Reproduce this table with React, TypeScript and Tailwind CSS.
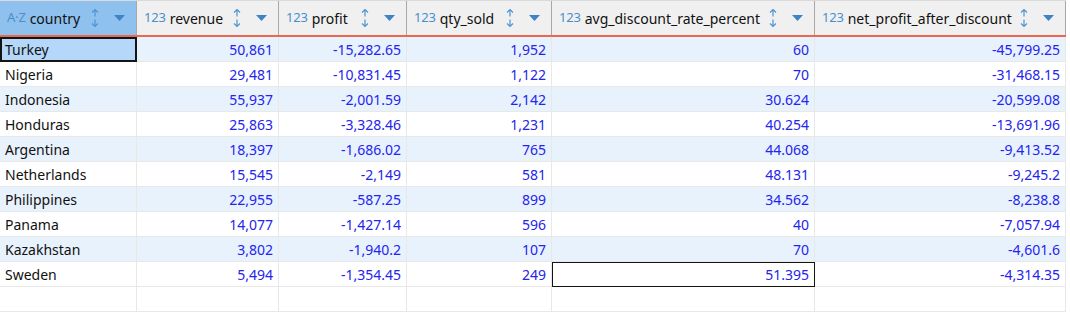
import type { ReactNode } from 'react';

type Row = {
    country: string;
    revenue: string;
    profit: string;
    qty: string;
    avg: string;
    net: string;
};

const ROWS: Row[] = [
    { country: 'Turkey', revenue: '50,861', profit: '-15,282.65', qty: '1,952', avg: '60', net: '-45,799.25' },
    { country: 'Nigeria', revenue: '29,481', profit: '-10,831.45', qty: '1,122', avg: '70', net: '-31,468.15' },
    { country: 'Indonesia', revenue: '55,937', profit: '-2,001.59', qty: '2,142', avg: '30.624', net: '-20,599.08' },
    { country: 'Honduras', revenue: '25,863', profit: '-3,328.46', qty: '1,231', avg: '40.254', net: '-13,691.96' },
    { country: 'Argentina', revenue: '18,397', profit: '-1,686.02', qty: '765', avg: '44.068', net: '-9,413.52' },
    { country: 'Netherlands', revenue: '15,545', profit: '-2,149', qty: '581', avg: '48.131', net: '-9,245.2' },
    { country: 'Philippines', revenue: '22,955', profit: '-587.25', qty: '899', avg: '34.562', net: '-8,238.8' },
    { country: 'Panama', revenue: '14,077', profit: '-1,427.14', qty: '596', avg: '40', net: '-7,057.94' },
    { country: 'Kazakhstan', revenue: '3,802', profit: '-1,940.2', qty: '107', avg: '70', net: '-4,601.6' },
    { country: 'Sweden', revenue: '5,494', profit: '-1,354.45', qty: '249', avg: '51.395', net: '-4,314.35' },
];

const COLS = [
    { key: 'country', label: 'country', kind: 'A-Z' },
    { key: 'revenue', label: 'revenue', kind: '123' },
    { key: 'profit', label: 'profit', kind: '123' },
    { key: 'qty', label: 'qty_sold', kind: '123' },
    { key: 'avg', label: 'avg_discount_rate_percent', kind: '123' },
    { key: 'net', label: 'net_profit_after_discount', kind: '123' },
] as const;

const GRID = 'grid grid-cols-[137px_142px_128px_145px_263px_251px]';

function SortIcon() {
    return (
        <svg width="10" height="20" viewBox="0 0 10 20" fill="none" stroke="#4d94d4" strokeWidth="1.2">
            <path d="M5 1.5 L5 8.5 M2 4.5 L5 1.5 L8 4.5" />
            <path d="M5 11.5 L5 18.5 M2 15.5 L5 18.5 L8 15.5" />
        </svg>
    );
}

function DropIcon() {
    return (
        <svg width="11" height="6" viewBox="0 0 11 6">
            <path d="M0 0 L11 0 L5.5 6 Z" fill="#3f83c6" />
        </svg>
    );
}

function HeadCell({ label, kind, active }: { label: string; kind: string; active?: boolean }) {
    return (
        <div
            className={`flex items-center h-[34px] pl-[7px] pr-[11px] border-r border-[#a8a8a8] ${
                active ? 'bg-[#8fc1ee]' : 'bg-[#f0f0f0]'
            }`}
        >
            <span className="text-[13px] text-[#4a8fcc] mr-[4px] tracking-[-0.2px]">
                {kind === 'A-Z' ? 'A·Z' : '123'}
            </span>
            <span className="text-[14px] text-[#111]">{label}</span>
            <div className="flex-1" />
            <SortIcon />
            <div className="w-[14px]" />
            <DropIcon />
        </div>
    );
}

function Cell({
    children,
    left,
    bg,
    frame,
}: {
    children?: ReactNode;
    left?: boolean;
    bg: string;
    frame?: 'thick' | 'thin';
}) {
    const framed =
        frame === 'thick'
            ? 'bg-[#b5d8fa] outline outline-2 -outline-offset-2 outline-[#141414]'
            : frame === 'thin'
              ? 'bg-white outline outline-1 -outline-offset-1 outline-[#141414]'
              : bg;
    return (
        <div
            className={`h-[25px] flex items-center px-[5px] border-r border-b border-[#e8e8e8] text-[14px] ${framed} ${
                left ? 'justify-start text-[#111]' : 'justify-end text-[#2424ee]'
            }`}
        >
            {children}
        </div>
    );
}

export default function App() {
    return (
        <div className="w-[1070px] h-[315px] bg-white overflow-hidden font-['Noto_Sans','Open_Sans',sans-serif]">
            <div className="w-[1066px] border-t border-[#dadada]">
                <div className={`${GRID} border-b-2 border-[#e9684f]`}>
                    {COLS.map((c, i) => (
                        <HeadCell key={c.key} label={c.label} kind={c.kind} active={i === 0} />
                    ))}
                </div>
                {ROWS.map((r, i) => {
                    const bg = i % 2 === 0 ? 'bg-[#e8f2fd]' : 'bg-white';
                    return (
                        <div key={r.country} className={GRID}>
                            <Cell left bg={bg} frame={i === 0 ? 'thick' : undefined}>
                                {r.country}
                            </Cell>
                            <Cell bg={bg}>{r.revenue}</Cell>
                            <Cell bg={bg}>{r.profit}</Cell>
                            <Cell bg={bg}>{r.qty}</Cell>
                            <Cell bg={bg} frame={i === 9 ? 'thin' : undefined}>
                                {r.avg}
                            </Cell>
                            <Cell bg={bg}>{r.net}</Cell>
                        </div>
                    );
                })}
                <div className={GRID}>
                    {COLS.map((c) => (
                        <Cell key={c.key} bg="bg-white" />
                    ))}
                </div>
            </div>
        </div>
    );
}
